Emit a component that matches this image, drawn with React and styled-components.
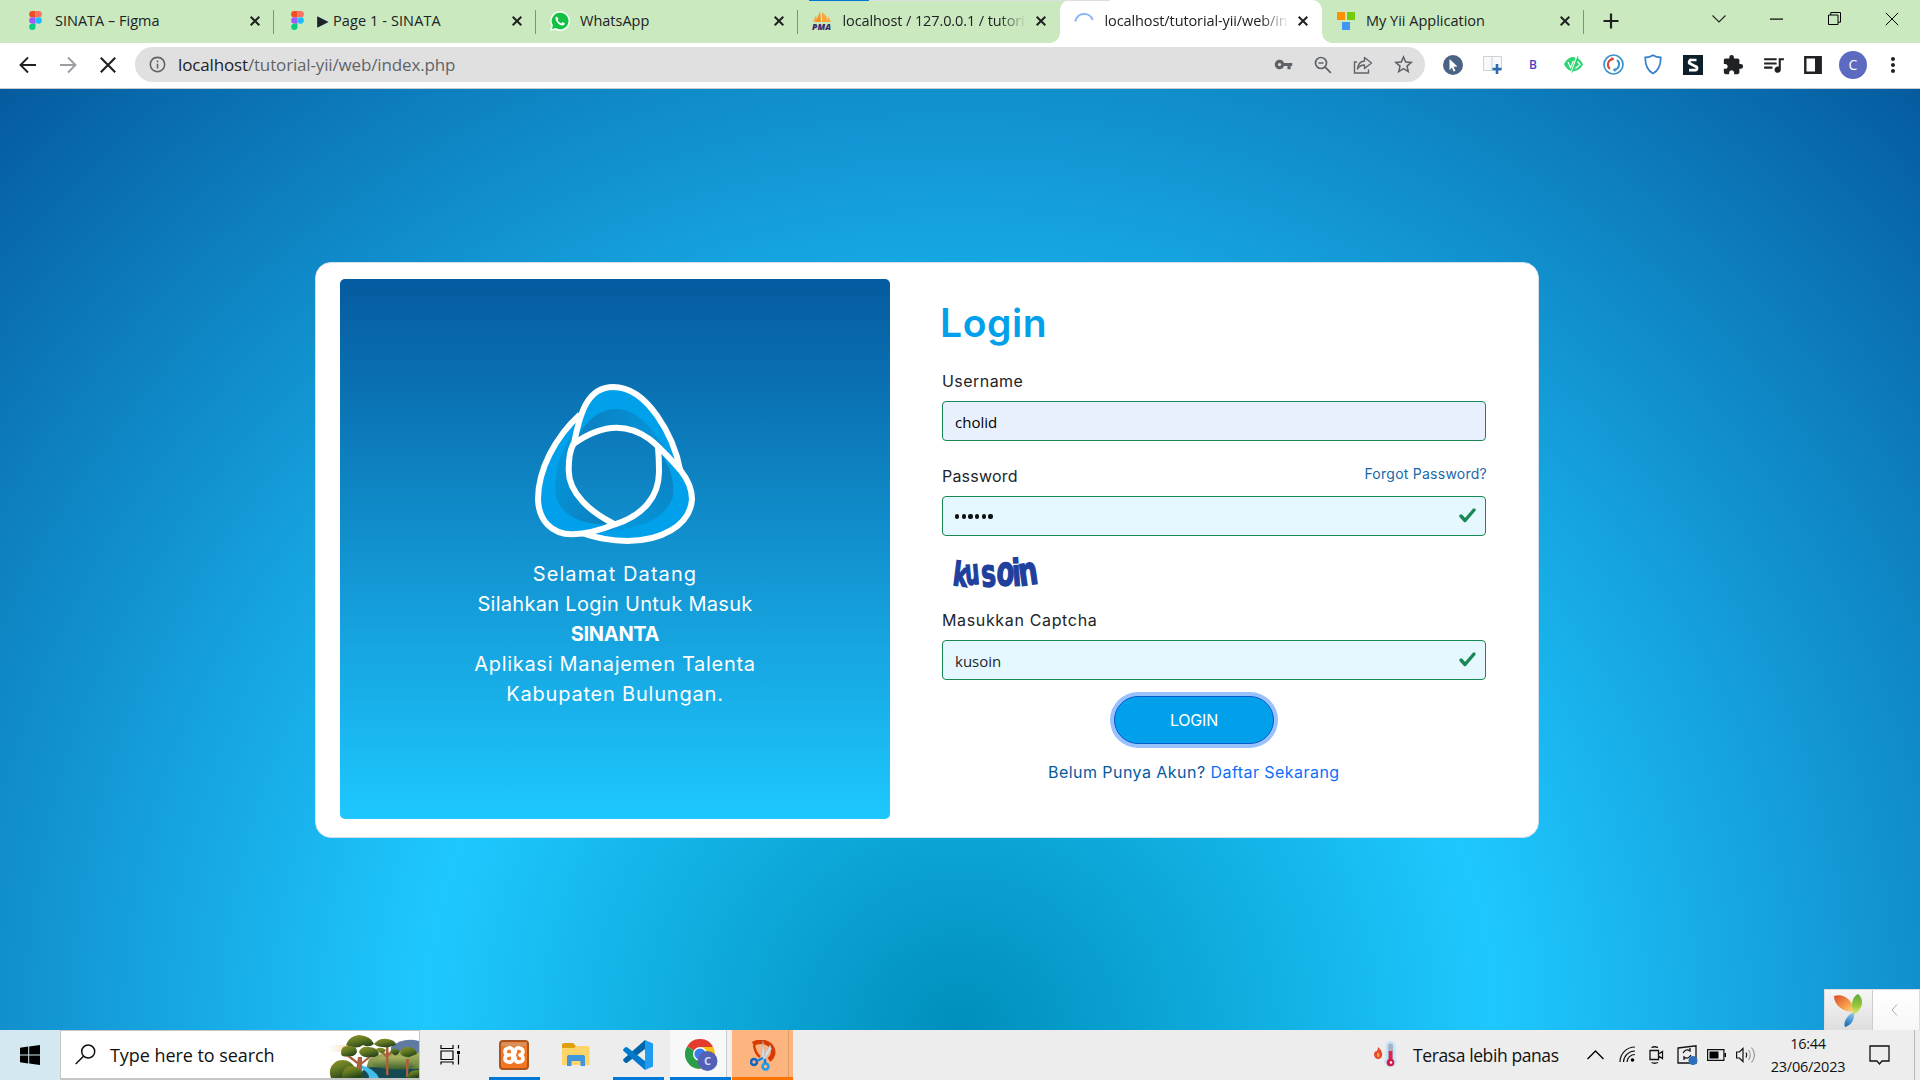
import React from "react";
import styled, { createGlobalStyle } from "styled-components";
import {
  MdVpnKey,
  MdStarBorder,
  MdExtension,
  MdQueueMusic,
  MdMoreVert,
  MdInfoOutline,
} from "react-icons/md";

const Global = createGlobalStyle`
  *, *::before, *::after { box-sizing: border-box; }
  html, body { margin: 0; padding: 0; overflow: hidden; }
  svg { display: block; flex: none; }
  p, h1 { margin: 0; }
`;

const ui = '"Open Sans", "Noto Sans", sans-serif';
const brand = 'Inter, "Open Sans", sans-serif';

/* ---------- window ---------- */

const Screen = styled.div`
  width: 1920px;
  height: 1080px;
  display: flex;
  flex-direction: column;
  overflow: hidden;
  position: relative;
  font-family: ${ui};
  color: #202124;
`;

const CaptureBar = styled.div`
  position: absolute;
  top: 0;
  left: 809px;
  width: 301px;
  height: 1px;
  z-index: 2;
  background: linear-gradient(to right, #0078d7 60px, #dcdfe0 60px);
`;

const TabStrip = styled.div`
  height: 43px;
  flex: none;
  display: flex;
  padding-left: 12px;
  background: #cae9be;
`;

const TabBox = styled.div`
  position: relative;
  width: 262px;
  display: flex;
  align-items: center;
  padding: 0 11px 2px 15px;
  background: ${(p) => (p.$active ? "#fff" : "transparent")};
  border-radius: ${(p) => (p.$active ? "10px 10px 0 0" : "0")};

  &::before,
  &::after {
    content: "";
    position: absolute;
    bottom: 0;
    width: 10px;
    height: 10px;
    display: ${(p) => (p.$active ? "block" : "none")};
  }
  &::before {
    left: -10px;
    background: radial-gradient(circle at 0 0, transparent 9.5px, #fff 10px);
  }
  &::after {
    right: -10px;
    background: radial-gradient(circle at 100% 0, transparent 9.5px, #fff 10px);
  }
`;

const TabDivider = styled.span`
  position: absolute;
  right: 0;
  top: 10px;
  width: 1px;
  height: 24px;
  background: #7f9278;
`;

const Favicon = styled.span`
  width: 20px;
  margin: 0 10px 0 -2px;
  padding-left: ${(p) => p.$dx || 0}px;
  display: flex;
  justify-content: center;
`;

const TabTitle = styled.span`
  width: 186px;
  margin-left: ${(p) => p.$dx || 0}px;
  margin-right: auto;
  overflow: hidden;
  white-space: nowrap;
  font-size: 14.5px;
  line-height: 22px;
  letter-spacing: ${(p) => p.$ls || 0}px;
  mask-image: ${(p) => (p.$fade ? "linear-gradient(to right, #000 155px, transparent 184px)" : "none")};
`;

const Cell = styled.span`
  width: ${(p) => p.$w}px;
  height: 100%;
  flex: none;
  display: flex;
  align-items: center;
  justify-content: center;
`;

const NewTab = styled(Cell)`
  padding-bottom: 1px;
`;

const WindowButtons = styled.div`
  display: flex;
  margin-left: auto;
  width: 230px;
  padding-bottom: 6px;
`;

const Toolbar = styled.div`
  height: 46px;
  flex: none;
  display: flex;
  align-items: center;
  padding: 0 7px 2px 8px;
  background: #fff;
  border-bottom: 1px solid #c6cacd;
`;

const Omnibox = styled.div`
  width: 1290px;
  height: 35px;
  margin-right: 8px;
  display: flex;
  align-items: center;
  padding: 0 2px 0 13px;
  background: #e0e0e0;
  border-radius: 18px;
  color: #5f6368;
`;

const Url = styled.span`
  flex: 1;
  margin-left: 11px;
  padding-top: 1px;
  font-size: 17px;
  line-height: 26px;
  letter-spacing: -0.15px;
  white-space: nowrap;
  color: #606468;
  b {
    font-weight: 400;
    color: #202124;
  }
`;

const ExtLetter = styled.span`
  font: 600 12px ${ui};
  color: #4a3fc4;
`;

const Avatar = styled.span`
  width: 28px;
  height: 28px;
  border-radius: 50%;
  display: flex;
  align-items: center;
  justify-content: center;
  background: #5c6bc0;
  color: #fff;
  font-size: 14px;
`;

/* ---------- page ---------- */

const Page = styled.main`
  position: relative;
  height: 941px;
  flex: none;
  padding: 173px 0 0 315px;
  background: radial-gradient(
    ellipse farthest-corner at 50% 100%,
    #008fbc 0%,
    #1ec8ff 39.3%,
    #055b9f 100%
  );
  font-family: ${brand};
`;

const Card = styled.section`
  width: 1224px;
  height: 576px;
  display: flex;
  padding: 16px 51px 17px 24px;
  background: #fff;
  border: 1px solid #d4e0e8;
  border-radius: 16px;
`;

const Welcome = styled.div`
  width: 550px;
  height: 540px;
  flex: none;
  display: flex;
  flex-direction: column;
  align-items: center;
  padding-top: 105px;
  border-radius: 5px;
  background: linear-gradient(#055b9f, #1ec8ff);
`;

const WelcomeText = styled.div`
  margin-top: 15px;
  display: flex;
  flex-direction: column;
  align-items: center;
`;

const WelcomeLine = styled.p`
  font-size: 20px;
  line-height: 30px;
  white-space: nowrap;
  color: #fff;
  font-weight: ${(p) => (p.$bold ? 700 : 400)};
  letter-spacing: ${(p) => p.$ls}px;
`;

const Form = styled.form`
  width: 545px;
  margin-left: 52px;
  display: flex;
  flex-direction: column;
  color: #212529;
`;

const Heading = styled.h1`
  height: 60px;
  margin: 14px 0 0 -2px;
  font-size: 39px;
  line-height: 60px;
  font-weight: 600;
  letter-spacing: 0.6px;
  color: #00a1ea;
`;

const LabelRow = styled.div`
  height: 24px;
  margin-top: ${(p) => p.$top}px;
  margin-bottom: ${(p) => p.$bottom ?? 8}px;
  display: flex;
  justify-content: space-between;
  white-space: nowrap;
`;

const Label = styled.label`
  font-size: 16px;
  line-height: 24px;
  letter-spacing: ${(p) => p.$ls}px;
`;

const Forgot = styled.a`
  font-size: 14px;
  line-height: 20px;
  letter-spacing: ${(p) => p.$ls}px;
  color: #1967a8;
`;

const Field = styled.div`
  height: 40px;
  width: 544px;
  display: flex;
  align-items: center;
  justify-content: space-between;
  padding: 2px 8px 0 12px;
  font-size: ${(p) => p.$size || 15.5}px;
  font-family: ${(p) => p.$font || brand};
  letter-spacing: ${(p) => p.$ls || 0}px;
  color: ${(p) => (p.$autofill ? "#000" : "#212529")};
  background: ${(p) => (p.$autofill ? "#e8f0fe" : "#e5f8ff")};
  border: 1px solid #198754;
  border-radius: 4px;
`;

const Dots = styled.span`
  display: flex;
  gap: 2.5px;
  padding-bottom: 1px;
  i {
    width: 4.2px;
    height: 4.2px;
    border-radius: 50%;
    background: #111;
  }
`;

const CaptchaRow = styled.div`
  height: 50px;
  margin-top: 12px;
`;

const LoginButton = styled.button`
  width: 160px;
  height: 48px;
  margin: 16px 0 0 172px;
  padding: 0 0 1px;
  font: 400 16px ${brand};
  letter-spacing: -0.2px;
  color: #fff;
  background: #00a1ea;
  border: 1px solid #0a58ca;
  border-radius: 24px;
  box-shadow: 0 0 0 4px #98c1fe;
`;

const SignUp = styled.p`
  margin: 16px 0 0 106px;
  font-size: 16px;
  line-height: 24px;
  white-space: nowrap;
  letter-spacing: ${(p) => p.$ls}px;
  color: #055b9f;
  a {
    color: #0d6efd;
  }
`;

const DebugBar = styled.div`
  position: absolute;
  right: 0;
  bottom: 0;
  width: 96px;
  height: 41px;
  display: flex;
  border: 1px solid #dcdcdc;
  border-bottom: 0;
`;

const DebugCell = styled.span`
  width: 47px;
  display: flex;
  align-items: center;
  justify-content: center;
  padding-right: ${(p) => (p.$light ? 4 : 0)}px;
  background: ${(p) => (p.$light ? "linear-gradient(#fff, #f7f7f7)" : "linear-gradient(#f6f6f6, #dedede)")};
  border-left: ${(p) => (p.$light ? "1px solid #ccc" : "0")};
`;

/* ---------- taskbar ---------- */

const Taskbar = styled.footer`
  height: 50px;
  flex: none;
  display: flex;
  background: #ededed;
  color: #111;
`;

const Start = styled(Cell)`
  background: #d3e8f0;
`;

const Search = styled.div`
  width: 360px;
  display: flex;
  align-items: center;
  padding-left: 14px;
  background: #fff;
  border: 1px solid #c6c6c6;
  border-bottom-width: 2px;
  font-size: 18px;
`;

const SearchText = styled.span`
  width: 220px;
  margin: 0 0 0 14px;
  white-space: nowrap;
  letter-spacing: ${(p) => p.$ls}px;
`;

const TaskButton = styled.div`
  width: ${(p) => p.$w}px;
  margin-left: ${(p) => p.$ml || 0}px;
  height: 50px;
  display: flex;
  justify-content: center;
  align-items: center;
  padding-top: ${(p) => (p.$line ? 3 : 0)}px;
  padding-left: ${(p) => p.$pl || 0}px;
  padding-right: ${(p) => p.$pr || 0}px;
  background: ${(p) => p.$bg || "transparent"};
  border-bottom: ${(p) => (p.$line ? `3px solid ${p.$line}` : "0")};
`;

const Tray = styled.div`
  display: flex;
  align-items: center;
  margin-left: auto;
  padding-bottom: 1px;
`;

const Weather = styled.span`
  width: 166px;
  margin-left: 16px;
  padding-top: 1px;
  font-size: 17.5px;
  white-space: nowrap;
  letter-spacing: ${(p) => p.$ls}px;
`;

const Clock = styled.div`
  width: 94px;
  margin-right: 1px;
  text-align: center;
  font-size: 14.5px;
  line-height: 23px;
  letter-spacing: ${(p) => p.$ls}px;
`;

const DesktopEdge = styled.span`
  width: 6px;
  height: 50px;
  border-left: 1px solid #b9b9b9;
`;

/* ---------- icons ---------- */

const Close = ({ size = 16, span = 4, w = 2, color = "#202124" }) => (
  <svg width={size} height={size} viewBox="0 0 16 16" stroke={color} strokeWidth={w}>
    <path d={`M${8 - span} ${8 - span}L${8 + span} ${8 + span}M${8 + span} ${8 - span}L${8 - span} ${8 + span}`} />
  </svg>
);

const Figma = () => (
  <svg width="13" height="19" viewBox="0 0 12 18">
    <path d="M3 0h3v6H3a3 3 0 0 1 0-6z" fill="#f24e1e" />
    <path d="M6 0h3a3 3 0 0 1 0 6H6z" fill="#ff7262" />
    <path d="M3 6h3v6H3a3 3 0 0 1 0-6z" fill="#a259ff" />
    <circle cx="9" cy="9" r="3" fill="#1abcfe" />
    <path d="M3 12h3v3a3 3 0 1 1-3-3z" fill="#0acf83" />
  </svg>
);

const WhatsApp = () => (
  <svg width="20" height="20" viewBox="0 0 24 24">
    <path d="M12 0a12 12 0 0 0-10.300 18L0 24l6.200-1.600A12 12 0 1 0 12 0z" fill="#f4fff4" />
    <path d="M12 2a10 10 0 0 0-8.500 15.200L2.400 21.600l4.500-1.100A10 10 0 1 0 12 2z" fill="#12c143" />
    <path d="M8.200 6.500c-1.500.6-2 2.300-1.200 4.200 1.300 3.200 4.500 6.200 7.600 6.700 1.700.2 3.100-.8 3.200-2.600l-3-1.500-1.400 1.600c-1.900-.7-3.400-2.100-4.300-4l1.200-1.400z" fill="#fff" />
  </svg>
);

const PmaText = styled.text`
  font: italic 800 8.500px "Open Sans", sans-serif;
`;

const Pma = () => (
  <svg width="20" height="20" viewBox="0 0 20 20">
    <path d="M8 0 9 11H2C5 8 7 4 8 0z" fill="#f7931e" />
    <path d="M10 1c4 3 6 7 6 10h-6z" fill="#fba83c" />
    <path d="M4 4 5 9 1 11z M16 5l3 6h-3z" fill="#f9a94a" />
    <PmaText x="0" y="19.200" textLength="19" fill="#3b2a6b">PMA</PmaText>
  </svg>
);

const Spinner = () => (
  <svg width="20" height="20" viewBox="0 0 20 20" fill="none">
    <path d="M1.300 10.500A9 9 0 0 1 18.700 9" stroke="#8ab4f8" strokeWidth="2" />
  </svg>
);

const Yii = () => (
  <svg width="18" height="18" viewBox="0 0 18 18">
    <path d="M0 0h8v8H0z" fill="#ff9100" />
    <path d="M10 0h8v8h-8z" fill="#72cc0b" />
    <path d="M5 10h8v8H5z" fill="#3f97f6" />
  </svg>
);

const Arrow = ({ flip, color }) => (
  <svg width="18" height="18" viewBox="0 0 18 18" fill="none" stroke={color} strokeWidth="1.900">
    <path d={flip ? "M1 9h15M9 1.500 16.500 9 9 16.500" : "M17 9H2M9 1.500 1.500 9 9 16.500"} />
  </svg>
);

const ZoomOut = () => (
  <svg width="18" height="18" viewBox="0 0 18 18" fill="none" stroke="#5f6368" strokeWidth="1.700">
    <circle cx="7" cy="7" r="5.500" />
    <path d="m11.200 11.200 5.600 5.600M4.500 7h5" />
  </svg>
);

const Share = () => (
  <svg width="20" height="18" viewBox="0 0 20 18" fill="none" stroke="#5f6368" strokeWidth="1.400">
    <path d="M4 6H1.500v11h14v-3.500" />
    <path d="M11.500 5V1.500L18.500 7l-7 5.500V9c-3 0-5.500 1-7 4 .3-4.500 2.800-7.500 7-8z" strokeLinejoin="round" />
  </svg>
);

const Cursor = () => (
  <svg width="20" height="20" viewBox="0 0 20 20">
    <circle cx="10" cy="10" r="10" fill="#4a6384" />
    <path d="m6.500 4 8 7.500-4 .3 2 4-1.800.8-1.900-4-2.300 2.600z" fill="#fff" />
  </svg>
);

const AddPanel = () => (
  <svg width="20" height="18" viewBox="0 0 20 18">
    <path d="M.5.5h18v14H.5z" fill="#f7f9fb" stroke="#ccd2da" />
    <path d="M9 0v15" stroke="#ccd2da" />
    <path d="M14 8v10M9.500 13h9" stroke="#2b6cb0" strokeWidth="2.600" />
  </svg>
);

const GreenEye = () => (
  <svg width="21" height="17" viewBox="0 0 21 17">
    <path d="M1 8C5 1 10 0 12.500 2L8 15C5 14 2 11 1 8z" fill="#2ed573" />
    <path d="M14 2c3 1 5 4 6 6.500-3 5-6 6.500-10 6.500z" fill="#2ed573" />
    <path d="m5 6 2.500 5.500L10.500 5M14.500 5.500l2.500 3-4.500 4" stroke="#fff" strokeWidth="1.200" fill="none" />
    <path d="M15 .5 9 16.500" stroke="#2ed573" strokeWidth="1.200" />
  </svg>
);

const SyncCircle = () => (
  <svg width="21" height="21" viewBox="0 0 21 21" fill="none">
    <circle cx="10.500" cy="10.500" r="9.500" stroke="#3a93c8" strokeWidth="1.700" />
    <path d="M9.500 5A5.700 5.700 0 0 0 7 15" stroke="#d9463b" strokeWidth="2" />
    <path d="M11.500 16A5.700 5.700 0 0 0 14 6" stroke="#3a93c8" strokeWidth="2" />
    <path d="m8.500 2.800 3 2.200-3 2z" fill="#d9463b" />
    <path d="m12.500 13.800-3 2.200 3 2z" fill="#3a93c8" />
  </svg>
);

const Shield = () => (
  <svg width="18" height="21" viewBox="0 0 18 21" fill="none" stroke="#3b82d0" strokeWidth="1.800">
    <path d="M9 1.200c2.500 1.600 5 2.200 7.800 2.300 0 7-1.300 12.500-7.800 16C2.500 16 1.200 10.500 1.200 3.500 4 3.400 6.500 2.800 9 1.200z" />
  </svg>
);

const SBadge = () => (
  <svg width="20" height="20" viewBox="0 0 20 20" fill="none">
    <path d="M0 0h20v20H0z" fill="#0d1f28" />
    <path d="M13.500 5H9a2 2 0 0 0-1.500 3.800l5 2.600A1.900 1.900 0 0 1 11.500 15.200H6" stroke="#fff" strokeWidth="2.700" />
  </svg>
);

const SidePanel = () => (
  <svg width="18" height="18" viewBox="0 0 18 18">
    <path d="M1.300 1.300h15.400v15.400H1.300z" fill="none" stroke="#202124" strokeWidth="2.400" />
    <path d="M11 1h6v16h-6z" fill="#202124" />
  </svg>
);

const CheckSlot = styled.span`
  padding-bottom: 3px;
`;

const Check = () => (
  <CheckSlot>
    <svg width="20" height="17" viewBox="0 0 20 17" fill="none">
      <path d="m4 9 4 4.500L17 3" stroke="#198754" strokeWidth="3.400" strokeLinecap="round" strokeLinejoin="round" />
    </svg>
  </CheckSlot>
);

const Logo = () => (
  <svg width="160" height="160" viewBox="105 72 480 480" fill="none">
    <defs>
      <linearGradient id="shadeTop" x1="0" x2="1">
        <stop offset="0.200" stopColor="#0a84c4" />
        <stop offset="1" stopColor="#0597df" />
      </linearGradient>
      <linearGradient id="shadeLeft" x1="1" y1="1" x2="0" y2="0">
        <stop offset="0.200" stopColor="#0a84c4" />
        <stop offset="1" stopColor="#0399e0" />
      </linearGradient>
      <linearGradient id="shadeRight" x1="0.800" y1="0" x2="0.300" y2="1">
        <stop offset="0.200" stopColor="#0a84c4" />
        <stop offset="1" stopColor="#0399e0" />
      </linearGradient>
    </defs>
    <g fill="#00a1ea">
      <path d="M541 333C522 228 442 81 340 81C262 81 239 160 222 252C262 222 305 203 350 203C430 203 476 258 541 333z" />
      <path d="M234 168C165 232 114 330 114 418C116 482 156 524 218 523C262 522 308 508 345 493C270 456 206 400 206 330C206 270 226 225 234 168z" />
      <path d="M477 265L546 335C568 364 576 392 576 418C570 500 478 543 382 543C330 543 296 534 262 524C310 512 318 505 345 493C430 466 477 410 477 330z" />
    </g>
    <path d="M228 235C262 178 300 147 345 147C415 147 462 208 520 305L470 255C430 220 395 203 350 203C305 203 262 222 224 250z" fill="url(#shadeTop)" />
    <path d="M214 222C175 290 160 350 167 404C180 460 230 494 335 495C260 455 206 400 206 330C206 290 212 255 214 222z" fill="url(#shadeLeft)" />
    <path d="M485 283C512 325 524 365 518 412C498 478 410 512 290 517L345 493C430 466 477 410 477 330z" fill="url(#shadeRight)" />
    <g stroke="#fff" strokeWidth="18">
      <path d="M240 163C165 232 114 330 114 418C116 482 156 524 218 523C262 522 308 508 345 493C430 466 477 410 477 335Q477 295 474 262" />
      <path d="M345 493C270 456 206 400 206 330C206 290 213 265 220 252" />
      <path d="M250 520C296 534 330 543 382 543C478 543 570 500 576 418C576 392 568 364 541 330C476 258 430 203 350 203C305 203 262 222 220 252" />
      <path d="M541 333C522 228 442 81 340 81C262 81 239 160 222 252" />
    </g>
  </svg>
);

const CaptchaGlyph = styled.text`
  font: ${(p) => p.$size}px "DejaVu Sans Condensed", "DejaVu Sans", sans-serif;
  font-weight: 700;
  fill: #213f9c;
  stroke: #213f9c;
  stroke-width: 1.400px;
`;

const captcha = [
  { c: "k", x: 10, y: 37, r: 7, s: 33, k: 0.740 },
  { c: "u", x: 24, y: 37, r: -5, s: 36, k: 0.620 },
  { c: "s", x: 40, y: 39, r: -4, s: 38, k: 0.720 },
  { c: "o", x: 54, y: 37, r: 3, s: 41, k: 0.700 },
  { c: "i", x: 71, y: 38, r: -4, s: 37, k: 0.760 },
  { c: "n", x: 78, y: 38, r: -8, s: 39, k: 0.780 },
];

const Captcha = () => (
  <svg width="120" height="50" viewBox="0 0 120 50">
    {captcha.map((g) => (
      <CaptchaGlyph
        key={g.c}
        $size={g.s}
        transform={`translate(${g.x} ${g.y}) rotate(${g.r}) scale(${g.k} 1)`}
      >
        {g.c}
      </CaptchaGlyph>
    ))}
  </svg>
);

const YiiLeaf = () => (
  <svg width="29" height="33" viewBox="0 0 29 33">
    <defs>
      <linearGradient id="leafA" x1="0" y1="0" x2="1" y2="1">
        <stop offset="0" stopColor="#dd4a2a" />
        <stop offset="0.600" stopColor="#f5a04c" />
        <stop offset="1" stopColor="#fbe98a" />
      </linearGradient>
      <linearGradient id="leafB" x1="0" y1="0" x2="0" y2="1">
        <stop offset="0" stopColor="#5fa83a" />
        <stop offset="0.600" stopColor="#9acb3e" />
        <stop offset="1" stopColor="#e8ee7c" />
      </linearGradient>
      <linearGradient id="leafC" x1="0.600" y1="0" x2="0.300" y2="1">
        <stop offset="0" stopColor="#8ec9f0" />
        <stop offset="1" stopColor="#1668b3" />
      </linearGradient>
    </defs>
    <path d="M0 2C9-1 19 5 20.500 19C9 17 0 12 0 2z" fill="url(#leafA)" />
    <path d="M24 0c5 4 7 12-3.500 21C16 11 18 3 24 0z" fill="url(#leafB)" />
    <path d="M20 18c1 7-2 13-9 15-2-5 2-12 9-15z" fill="url(#leafC)" />
  </svg>
);

const TreeSlot = styled.span`
  margin-top: 4px;
`;

const Trees = () => (
  <TreeSlot>
    <svg width="90" height="43" viewBox="0 0 90 43">
      <defs>
        <linearGradient id="leafy" x1="0" y1="0" x2="0.500" y2="1">
          <stop offset="0" stopColor="#95902a" />
          <stop offset="0.500" stopColor="#637a22" />
          <stop offset="1" stopColor="#294719" />
        </linearGradient>
        <linearGradient id="bush" x1="0" y1="0" x2="0" y2="1">
          <stop offset="0" stopColor="#b4ba63" />
          <stop offset="1" stopColor="#38602a" />
        </linearGradient>
        <linearGradient id="cloud">
          <stop offset="0" stopColor="#fff" />
          <stop offset="1" stopColor="#f4d9ae" />
        </linearGradient>
      </defs>
      <rect x="0" y="10" width="24" height="7" rx="3.500" fill="url(#cloud)" />
      <path d="M62 12Q74 2 90 6V30H62z" fill="#5f7ba0" />
      <path d="M40 24Q60 12 90 18V43H34z" fill="url(#bush)" />
      <path d="M34 43Q28 34 44 32L90 34V43z" fill="#164a52" />
      <path d="M32 30q14 4 18 13H40q0-7-10-10z" fill="#43bdea" />
      <path d="M44 30Q48 20 62 22Q78 18 86 32Q66 38 44 30z" fill="url(#bush)" />
      <path d="M26 43l3-21h4l0 21zM57 40V12h2.500V40zM77 42l0-18 3 0-1 18z" fill="#a8613c" />
      <path d="M30 29 18 20M32 29l11-9M58 22l-6-6M59 20l6-4" stroke="#a8613c" strokeWidth="2.200" />
      <g fill="url(#leafy)">
        <path d="M17 10Q20 1 30 0Q42 1 45 9Q40 13 34 10Q28 15 17 10z" />
        <path d="M12 18Q12 10 20 11Q28 10 28 17Q26 22 20 21Q12 23 12 18z" />
        <path d="M30 17Q32 11 40 12Q50 13 50 19Q47 23 40 22Q32 23 30 17z" />
        <path d="M45 9Q50 3 58 4Q67 5 67 10L60 12Q50 13 45 9z" />
        <path d="M47 14q5-3 10 1-2 4-6 3zM61 16q5-5 10 0-2 5-6 4z" />
        <path d="M71 18q1-6 8-6 9 1 9 7l-8 3q-7 0-9-4z" />
        <path d="M2 43Q-2 32 8 26Q20 22 26 33V43z" />
        <path d="M13 43Q13 31 24 31Q34 33 34 43z" />
        <path d="M78 43q2-9 12-8v8z" />
      </g>
    </svg>
  </TreeSlot>
);

const Xampp = () => (
  <svg width="30" height="30" viewBox="0 0 30 30" fill="none">
    <rect x="1" y="1" width="28" height="28" rx="3" fill="#f37623" stroke="#a9551d" strokeWidth="2" />
    <path d="M2.500 2.500h25v3.500h-25z" fill="#d8915c" />
    <g stroke="#fff" strokeWidth="3.600" strokeLinejoin="round">
      <path d="M14 15C10 15 6 15.500 6 11.500S13 6.500 13.500 10Q13.500 12 15 15Q16.500 12 16.500 10C17 6.500 24 7.500 24 11.500Q24 14 21 15Q24 16 24 18.500C24 22.500 17 23.500 16.500 20Q16.500 18 15 15Q13.500 18 13.500 20C13 23.500 6 22.500 6 18.500Q6 16 9 15" />
    </g>
  </svg>
);

const Folder = () => (
  <svg width="28" height="24" viewBox="0 0 28 24">
    <path d="M0 2q0-2 2-2h9l3 3v4H0z" fill="#e0a00c" />
    <path d="M0 5h12l2-2h12q1.500 0 1.500 1.500V22H0z" fill="#ffd569" />
    <path d="M5 23v-9q0-2 2-2h14q2 0 2 2v9h-4.500v-5h-9v5z" fill="#3f96dd" />
  </svg>
);

const VsCode = () => (
  <svg width="30" height="30" viewBox="0 0 30 30">
    <path d="M22 0v9L4.500 22.500Q3 23.500 2 22.500L.5 21q-1-1 .3-2.200z" fill="#0065a9" />
    <path d="M22 30v-9L4.500 7.500Q3 6.500 2 7.500L.5 9q-1 1 .3 2.200z" fill="#007acc" />
    <path d="M22 0 30 3.500v23L22 30z" fill="#1f9cf0" />
  </svg>
);

const ChromeLetter = styled.text`
  font: 700 11px "Open Sans", sans-serif;
`;

const Chrome = () => (
  <svg width="33" height="32" viewBox="0 0 33 32">
    <path d="M15 15 2 7.500A15 15 0 0 1 28 7.500z" fill="#e33b2e" />
    <path d="M15 15 2 7.500A15 15 0 0 0 15 30l6-11z" fill="#2a9d48" />
    <path d="M15 8h13.300A15 15 0 0 1 15 30l6.500-11z" fill="#fbc116" />
    <circle cx="15" cy="15" r="7" fill="#fff" />
    <circle cx="15" cy="15" r="5.600" fill="#3b7ded" />
    <circle cx="22.500" cy="22" r="10" fill="#5361b5" />
    <ChromeLetter x="22.500" y="26" textAnchor="middle" fill="#d5dbff">C</ChromeLetter>
  </svg>
);

const Snip = () => (
  <svg width="27" height="31" viewBox="0 0 27 31" fill="none">
    <path d="M3 4Q12-1 20 5Q27 13 19 20" stroke="#d83b01" strokeWidth="4.500" />
    <path d="M4 5q1 8 6 12" stroke="#d83b01" strokeWidth="2.400" />
    <path d="M13 1l2.500 18-3.500 3-1-4zM20 5l1.500 4-6 10-3-1z" fill="#d9dde1" stroke="#a8adb3" strokeWidth=".5" />
    <circle cx="4" cy="22" r="3" stroke="#0f66c2" strokeWidth="2.500" />
    <circle cx="15.500" cy="26.500" r="3" stroke="#1a9df0" strokeWidth="2.500" />
    <path d="m7 21 6-3M15 23v-4" stroke="#1a7fd6" strokeWidth="2.500" />
  </svg>
);

const tabs = [
  { icon: <Figma />, title: "SINATA – Figma", ls: 0 },
  { icon: <Figma />, title: "▶ Page 1 - SINATA", ls: 0.100 },
  { icon: <WhatsApp />, title: "WhatsApp", ls: 0, dx: 1 },
  { icon: <Pma />, title: "localhost / 127.0.0.1 / tutorial", ls: -0.100, fade: true, dx: 1.500 },
  { icon: <Spinner />, title: "localhost/tutorial-yii/web/index.php", ls: -0.100, fade: true, active: true, dx: 1.500 },
  { icon: <Yii />, title: "My Yii Application", ls: 0, dx: 1 },
];

const extensions = [
  <Cursor />,
  <AddPanel />,
  <ExtLetter>B</ExtLetter>,
  <GreenEye />,
  <SyncCircle />,
  <Shield />,
  <SBadge />,
  <MdExtension size={22} />,
  <MdQueueMusic size={25} />,
  <SidePanel />,
  <Avatar>C</Avatar>,
  <MdMoreVert size={24} />,
];

const welcome = [
  { text: "Selamat Datang", ls: 1.100 },
  { text: "Silahkan Login Untuk Masuk", ls: 0.300 },
  { text: "SINANTA", ls: -0.300, bold: true },
  { text: "Aplikasi Manajemen Talenta", ls: 0.700 },
  { text: "Kabupaten Bulungan.", ls: 0.800 },
];

export default function App() {
  return (
    <Screen>
      <Global />
      <CaptureBar />
      <TabStrip>
        {tabs.map((t, i) => (
          <TabBox key={t.title} $active={t.active}>
            <Favicon $dx={t.dx}>{t.icon}</Favicon>
            <TabTitle $ls={t.ls} $fade={t.fade} $dx={t.dx}>{t.title}</TabTitle>
            <Close span={4.300} />
            {i !== 3 && i !== 4 && <TabDivider />}
          </TabBox>
        ))}
        <NewTab $w={54}>
          <svg width="16" height="16" viewBox="0 0 16 16" stroke="#202124" strokeWidth="2.200">
            <path d="M8 .5v15M.5 8h15" />
          </svg>
        </NewTab>
        <WindowButtons>
          <Cell $w={58}>
            <svg width="14" height="8" viewBox="0 0 14 8" fill="none" stroke="#222" strokeWidth="1.100">
              <path d="m.5.500 6.500 6.500L13.500.5" />
            </svg>
          </Cell>
          <Cell $w={57}>
            <svg width="14" height="2" viewBox="0 0 14 2"><path d="M0 .5h13v1.200H0z" /></svg>
          </Cell>
          <Cell $w={58}>
            <svg width="13" height="13" viewBox="0 0 13 13" fill="none" stroke="#000">
              <path d="M.5 3h9.500v9.500H.5zM2.800 3V.5h9.700v9.700H10" />
            </svg>
          </Cell>
          <Cell $w={57}><Close size={16} span={6.200} w={1} color="#000" /></Cell>
        </WindowButtons>
      </TabStrip>

      <Toolbar>
        <Cell $w={40}><Arrow color="#202124" /></Cell>
        <Cell $w={40}><Arrow flip color="#9b9da0" /></Cell>
        <Cell $w={40}><Close size={18} span={6.400} w={1.900} /></Cell>
        <Cell $w={7} />
        <Omnibox>
          <MdInfoOutline size={19} />
          <Url><b>localhost</b>/tutorial-yii/web/index.php</Url>
          <Cell $w={40}><MdVpnKey size={19} /></Cell>
          <Cell $w={40}><ZoomOut /></Cell>
          <Cell $w={40}><Share /></Cell>
          <Cell $w={40}><MdStarBorder size={23} /></Cell>
        </Omnibox>
        {extensions.map((icon, i) => (
          <Cell $w={40} key={i}>{icon}</Cell>
        ))}
      </Toolbar>

      <Page>
        <Card>
          <Welcome>
            <Logo />
            <WelcomeText>
              {welcome.map((l) => (
                <WelcomeLine key={l.text} $ls={l.ls} $bold={l.bold}>{l.text}</WelcomeLine>
              ))}
            </WelcomeText>
          </Welcome>
          <Form>
            <Heading>Login</Heading>
            <LabelRow $top={16}><Label $ls={0.450}>Username</Label></LabelRow>
            <Field $autofill $font={ui} $size={15}>cholid</Field>
            <LabelRow $top={23}>
              <Label $ls={0.200}>Password</Label>
              <Forgot $ls={0.250}>Forgot Password?</Forgot>
            </LabelRow>
            <Field>
              <Dots><i /><i /><i /><i /><i /><i /></Dots>
              <Check />
            </Field>
            <CaptchaRow><Captcha /></CaptchaRow>
            <LabelRow $top={10} $bottom={8}><Label $ls={0.650}>Masukkan Captcha</Label></LabelRow>
            <Field $font={ui} $size={15}>kusoin<Check /></Field>
            <LoginButton type="button">LOGIN</LoginButton>
            <SignUp $ls={0.450}>Belum Punya Akun? <a>Daftar Sekarang</a></SignUp>
          </Form>
        </Card>
        <DebugBar>
          <DebugCell><YiiLeaf /></DebugCell>
          <DebugCell $light>
            <svg width="7" height="12" viewBox="0 0 7 12" fill="none" stroke="#aaa"><path d="M6 .5 1 6l5 5.500" /></svg>
          </DebugCell>
        </DebugBar>
      </Page>

      <Taskbar>
        <Start $w={60}>
          <svg width="20" height="20" viewBox="0 0 20 20">
            <path d="M0 2.800 8.200 1.600V9.500H0zM9.200 1.400 20 0v9.500H9.200zM0 10.500h8.200v8L0 17.200zM9.200 10.500H20V20L9.200 18.600z" />
          </svg>
        </Start>
        <Search>
          <svg width="21" height="21" viewBox="0 0 21 21" fill="none" stroke="#111" strokeWidth="1.500">
            <circle cx="13.200" cy="7.500" r="6.500" /><path d="M8.500 12.200.7 20" />
          </svg>
          <SearchText $ls={-0.060}>Type here to search</SearchText>
          <Trees />
        </Search>
        <TaskButton $w={60}>
          <svg width="21" height="20" viewBox="0 0 21 20" fill="none" stroke="#000" strokeWidth="1.200">
            <path d="M1 0v3.500h12V0M1 6h12v8.500H1zM1 19.500V17h12v2.500M18.500 0v3.500M18.500 9.500v10" />
            <path d="M17 6h3v3h-3z" fill="#000" stroke="none" />
          </svg>
        </TaskButton>
        <TaskButton $w={51} $ml={9} $pr={2} $line="#0078d7"><Xampp /></TaskButton>
        <TaskButton $w={51} $ml={11} $pr={2}><Folder /></TaskButton>
        <TaskButton $w={51} $ml={11} $pr={2} $line="#0078d7"><VsCode /></TaskButton>
        <TaskButton $w={61} $ml={6} $pl={2} $line="#0078d7" $bg="linear-gradient(to right, #f8f8f8 56px, #ccc 56px, #ccc 57px, #f0f0f0 57px)"><Chrome /></TaskButton>
        <TaskButton $w={61} $ml={1} $pl={2} $line="#ff7300" $bg="linear-gradient(to right, #fdb47e 56px, #e09a66 56px, #e09a66 57px, #fdb47e 57px)"><Snip /></TaskButton>

        <Tray>
          <svg width="23" height="28" viewBox="0 0 23 28">
            <path d="M4 6q5 4 4 9-1 3-4 3T0 14q0-4 3-4 1-2 1-4z" fill="#e8482c" />
            <path d="M4 11q2 2 1.500 4.500Q4 17 3 15q-.5-2 1-4z" fill="#ffa24a" />
            <path d="M11.500 5a5 5 0 0 1 10 0v12a6 6 0 1 1-10 0z" fill="#c5e3fb" />
            <path d="M14 5a2 2 0 0 1 5 0v14h-5z" fill="#a8b4c4" />
            <path d="M14.800 10h3.600v10h-3.600z" fill="#e5214e" />
            <circle cx="16.500" cy="21.500" r="3.800" fill="#d41b47" />
            <circle cx="17" cy="21.500" r="1.200" fill="#fff" />
          </svg>
          <Weather $ls={-0.400}>Terasa lebih panas</Weather>
          <Cell $w={33}>
            <svg width="17" height="10" viewBox="0 0 17 10" fill="none" stroke="#000" strokeWidth="1.400"><path d="M.5 9 8.500 1l8 8" /></svg>
          </Cell>
          <Cell $w={30}>
            <svg width="17" height="17" viewBox="0 0 17 17" fill="none" stroke="#111" strokeWidth="1.200">
              <path d="M1 16A15 15 0 0 1 16 1M4.500 16A11.500 11.500 0 0 1 16 5M8 16a8 8 0 0 1 8-7.500" />
              <circle cx="13.500" cy="14" r="1.800" fill="#000" stroke="none" />
            </svg>
          </Cell>
          <Cell $w={30}>
            <svg width="16" height="18" viewBox="0 0 16 18" fill="none" stroke="#111" strokeWidth="1.300">
              <path d="M1 4.500h8.500v9H1zM9.500 8 13.500 5.500v7L9.500 10M2.500 1.500q3-1.500 6.500 0M2.500 16.500q3 1.500 6.500 0" />
            </svg>
          </Cell>
          <Cell $w={30}>
            <svg width="21" height="20" viewBox="0 0 21 20" fill="none" stroke="#111" strokeWidth="1.300">
              <path d="M1 3 19 .8V18L1 18z" />
              <path d="M6 8q3-5 7-2V3M14 10q-3 5-7 2v3" />
              <circle cx="16" cy="15.500" r="4.500" fill="#2d6fba" stroke="none" />
            </svg>
          </Cell>
          <Cell $w={30}>
            <svg width="20" height="12" viewBox="0 0 20 12" fill="none">
              <path d="M.6.600h16.300v10.800H.6z" stroke="#111" strokeWidth="1.200" />
              <path d="M2.500 2.500h9v7h-9zM17.500 4H19v4h-1.500z" fill="#000" />
            </svg>
          </Cell>
          <Cell $w={29}>
            <svg width="21" height="18" viewBox="0 0 21 18" fill="none" stroke="#111" strokeWidth="1.200">
              <path d="M.6 6h2.800L7 2.500v13L3.400 12H.600z" />
              <path d="M10 6.500q1.500 2.500 0 5" />
              <path d="M12.500 4q3.500 5 0 10M15.500 1.500q6 7.500 0 15" stroke="#999" />
            </svg>
          </Cell>
          <Clock $ls={-0.250}>16:44<br />23/06/2023</Clock>
          <Cell $w={46}>
            <svg width="21" height="20" viewBox="0 0 21 20" fill="none" stroke="#111" strokeWidth="1.300">
              <path d="M1 1h19v15h-7l-2.500 3L8 16H1z" />
            </svg>
          </Cell>
          <Cell $w={12} />
          <DesktopEdge />
        </Tray>
      </Taskbar>
    </Screen>
  );
}
